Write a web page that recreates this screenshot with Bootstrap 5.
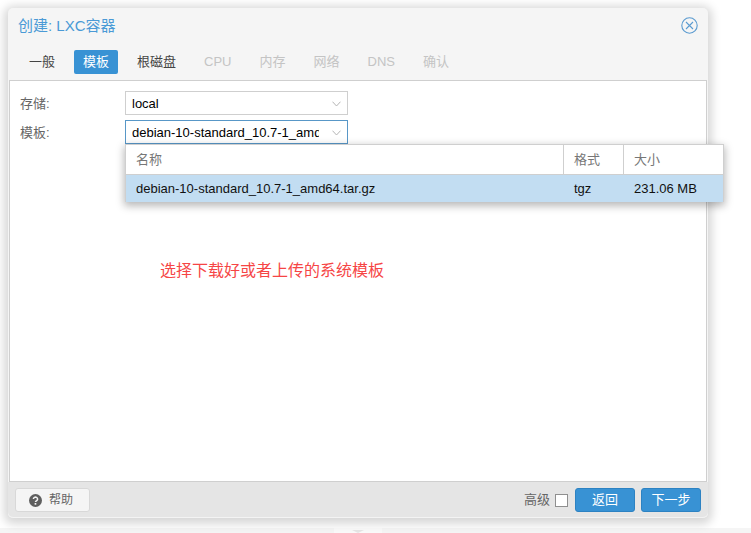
<!DOCTYPE html>
<html lang="zh"><head><meta charset="utf-8"><title>创建: LXC容器</title>
<link href="https://cdn.jsdelivr.net/npm/bootstrap@5.3.0/dist/css/bootstrap.min.css" rel="stylesheet">
<style>
html,body{height:100%;margin:0;overflow:hidden;background:#fff;}
body{font-family:"Liberation Sans","Noto Sans CJK SC",sans-serif;font-size:13px;color:#333;position:relative;}
.pagestrip{position:absolute;left:0;right:0;top:528px;height:5px;background:#f5f5f5;}
.stripseg{position:absolute;left:334px;top:0;width:48px;height:5px;background:#fafafa;}
.striptri{position:absolute;left:352px;top:2px;width:12px;height:3px;}
.win{position:absolute;left:8px;top:8px;width:700px;height:510px;background:#f5f5f5;border-radius:5px;box-shadow:0 2px 10px 4px rgba(0,0,0,.16);display:flex;flex-direction:column;}
.win-head{height:38px;padding:7px 10px 0 10px;flex:none;}
.win-title{font-size:15px;line-height:22px;color:#4a9ad6;}
.closer{width:17px;height:17px;margin-top:2px;}
.tabbar{height:34px;flex:none;padding-left:12px;gap:10px;}
.tabx{height:24px;line-height:24px;padding:0 9px;font-size:13px;color:#444;border-radius:2px;margin-top:4px;}
.tabx.on{background:#3892d4;color:#fff;}
.tabx.off{color:#c4c4c4;}
.panelbody{flex:1 1 auto;background:#fff;border:1px solid #cfcfcf;margin:0 1px 0 1px;padding:10px;min-height:0;}
.frow{height:24px;margin-bottom:5px;}
.flabel{width:105px;font-size:13px;color:#666;line-height:25px;flex:none;}
.fcombo{width:223px;height:24px;border:1px solid #cfcfcf;background:#fff;display:flex;align-items:center;padding:1px 6px 0;font-size:13px;color:#000;flex:none;}
.fcombo.act{border-color:#5897c7;}
.ftext{flex:1;overflow:hidden;white-space:nowrap;min-width:0;}
.chev{width:9px;height:6px;margin-left:13px;margin-right:0;flex:none;}
.foot{height:36px;flex:none;background:#e5e5e5;padding:0 7px 0 7px;border-radius:0 0 5px 5px;box-shadow:inset 0 -1px 0 #f3f3f3;}
.helpbtn{width:75px;height:24px;background:#f5f5f5;border:1px solid #d8d8d8;border-radius:3px;font-size:12px;color:#666;gap:7px;padding:0 0 0 13px;}
.advlabel{font-size:13px;color:#666;margin-right:5px;}
.advbox{width:13px;height:13px;background:#fff;border:1px solid #8f8f8f;margin-right:7px;}
.navbtn{width:60px;height:24px;background:#3892d4;border:1px solid #2d82c2;border-radius:3px;color:#fff;font-size:13px;line-height:22px;text-align:center;}
.navbtn+.navbtn{margin-left:6px;}
.picker{position:absolute;left:125px;top:144px;width:599px;height:58px;background:#fff;border:1px solid #cfcfcf;box-shadow:0 3px 8px 1px rgba(0,0,0,.28);font-size:13px;}
.phead{height:30px;border-bottom:1px solid #cfcfcf;color:#777;font-size:13px;}
.prow{height:27px;background:#c2ddf2;color:#111;line-height:27px;font-size:13px;}
.c1{width:437px;padding-left:10px;flex:none;}
.c2{width:60px;padding-left:10px;flex:none;}
.c3{flex:1;padding-left:10px;}
.prow .c2,.prow .c3{padding-left:11px;}
.phead>div{height:29px;line-height:29px;}
.phead .c2,.phead .c3{border-left:1px solid #cfcfcf;}
.note{position:absolute;left:160px;top:261px;font-size:16px;line-height:20px;color:#f64545;}
</style></head><body>
<div class="pagestrip"><div class="stripseg"></div><svg class="striptri" viewBox="0 0 12 3"><path d="M0 0h12L6 3z" fill="#e6e6e6"/></svg></div>
<div class="win">
  <div class="win-head d-flex justify-content-between align-items-start">
    <div class="win-title">创建: LXC容器</div>
    <svg class="closer" viewBox="0 0 17 17" fill="none" stroke="#5b9bd0" stroke-width="1.1"><circle cx="8.5" cy="8.5" r="7.7"/><path d="M5 5l7 7M12 5l-7 7"/></svg>
  </div>
  <div class="tabbar d-flex align-items-start">
    <div class="tabx">一般</div><div class="tabx on">模板</div><div class="tabx">根磁盘</div><div class="tabx off">CPU</div><div class="tabx off">内存</div><div class="tabx off">网络</div><div class="tabx off">DNS</div><div class="tabx off">确认</div>
  </div>
  <div class="panelbody">
    <div class="frow d-flex"><div class="flabel">存储:</div><div class="fcombo"><span class="ftext">local</span><svg class="chev" viewBox="0 0 9 6" fill="none" stroke="#b5b5b5"><path d="M.5.7L4.5 5l4-4.3"/></svg></div></div>
    <div class="frow d-flex"><div class="flabel">模板:</div><div class="fcombo act"><span class="ftext">debian-10-standard_10.7-1_amd64.tar.gz</span><svg class="chev" viewBox="0 0 9 6" fill="none" stroke="#b5b5b5"><path d="M.5.7L4.5 5l4-4.3"/></svg></div></div>
  </div>
  <div class="foot d-flex align-items-center">
    <div class="helpbtn d-flex align-items-center"><svg width="13" height="13" viewBox="0 0 13 13"><circle cx="6.5" cy="6.5" r="6.5" fill="#5f5f5f"/><path d="M4.4 5a2.1 1.9 0 1 1 3.3 1.6c-.8.5-1.2.8-1.2 1.4" fill="none" stroke="#f5f5f5" stroke-width="1.5"/><rect x="5.6" y="9" width="1.7" height="1.7" fill="#f5f5f5"/></svg><span>帮助</span></div>
    <div class="ms-auto d-flex align-items-center">
      <span class="advlabel">高级</span><span class="advbox"></span>
      <div class="navbtn">返回</div><div class="navbtn">下一步</div>
    </div>
  </div>
</div>
<div class="picker">
  <div class="phead d-flex"><div class="c1">名称</div><div class="c2">格式</div><div class="c3">大小</div></div>
  <div class="prow d-flex"><div class="c1">debian-10-standard_10.7-1_amd64.tar.gz</div><div class="c2">tgz</div><div class="c3">231.06 MB</div></div>
</div>
<div class="note">选择下载好或者上传的系统模板</div>
</body></html>
